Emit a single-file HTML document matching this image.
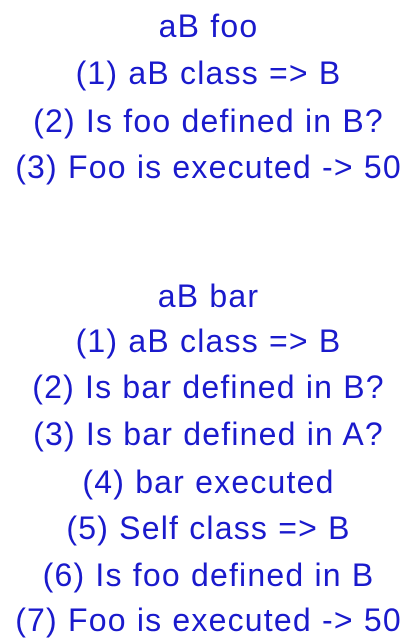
<!DOCTYPE html>
<html><head><style>
body{margin:0;width:417px;height:643px;background:#fff;overflow:hidden}
div{position:absolute;left:0;width:417px;text-align:center;font-family:"Liberation Sans",sans-serif;font-size:32px;letter-spacing:1.2px;color:#1a1acc;line-height:40px}
</style></head><body>
<div style="top:6px">aB foo</div>
<div style="top:53px">(1) aB class =&gt; B</div>
<div style="top:101px">(2) Is foo defined in B?</div>
<div style="top:147px">(3) Foo is executed -&gt; 50</div>
<div style="top:276px">aB bar</div>
<div style="top:321px">(1) aB class =&gt; B</div>
<div style="top:367px">(2) Is bar defined in B?</div>
<div style="top:414px">(3) Is bar defined in A?</div>
<div style="top:462px">(4) bar executed</div>
<div style="top:508px">(5) Self class =&gt; B</div>
<div style="top:555px">(6) Is foo defined in B</div>
<div style="top:600px">(7) Foo is executed -&gt; 50</div>
</body></html>
